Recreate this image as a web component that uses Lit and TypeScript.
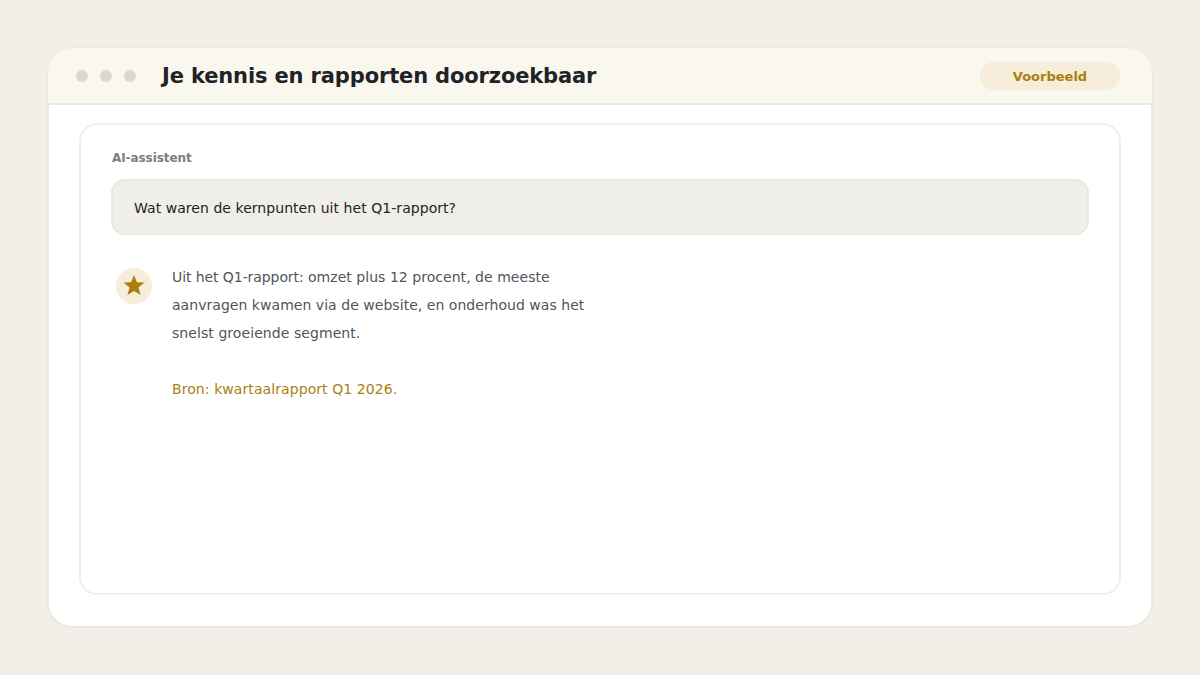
import { LitElement, html, css } from "lit";
import { customElement } from "lit/decorators.js";

@customElement("app-root")
export class AppRoot extends LitElement {
  static styles = css`
    :host {
      display: block;
      box-sizing: border-box;
      height: 675px;
      padding: 47px;
      background: #f3eee7;
      font-family: "DejaVu Sans", sans-serif;
      color: #1d2327;
    }
    * { box-sizing: border-box; }
    .window {
      height: 581px;
      border: 2px solid #ece9e2;
      border-radius: 25px;
      background: #fff;
      display: flex;
      flex-direction: column;
    }
    .header {
      height: 57px;
      flex: none;
      margin: -1px -1px 0;
      padding: 0 32px 0 28px;
      border-bottom: 2px solid #ebe8e2;
      border-radius: 24px 24px 0 0;
      background: #faf7ef;
      display: flex;
      align-items: center;
    }
    .dots { display: flex; gap: 12px; margin-right: 26px; }
    .dot { width: 12px; height: 12px; border-radius: 50%; background: #dad8cf; }
    .title { margin: 0; font-size: 21px; font-weight: 700; line-height: 28px; letter-spacing: -0.14px; white-space: nowrap; }
    .badge {
      margin-left: auto;
      width: 140px;
      height: 28px;
      border-radius: 14px;
      background: #f6edda;
      color: #a97f10;
      font-size: 13px;
      font-weight: 700;
      line-height: 30px;
      text-align: center;
    }
    .panel {
      margin: 18px 30px 0;
      height: 472px;
      border: 2px solid #f0efeb;
      border-radius: 18px;
      padding: 25px 30px;
    }
    .label { font-size: 12px; font-weight: 700; line-height: 16px; letter-spacing: -0.07px; color: #7c7e80; margin-left: 1px; }
    .question {
      margin-top: 13px;
      height: 56px;
      border: 2px solid #ebe9e2;
      border-radius: 14px;
      background: #f0eee9;
      padding: 0 21px;
      font-size: 14px;
      line-height: 54px;
      letter-spacing: 0.05px;
    }
    .answer { display: flex; gap: 20px; margin: 28px 0 0 5px; }
    .avatar { width: 36px; height: 36px; margin-top: 5px; flex: none; display: block; }
    .copy { font-size: 14px; line-height: 28px; color: #50555a; white-space: nowrap; }
    .copy p { margin: 0; }
    .tight { letter-spacing: -0.08px; }
    .wide { letter-spacing: 0.04px; }
    .loose { letter-spacing: 0.04px; }
    .looser { letter-spacing: 0.07px; }
    .copy .source { margin-top: 28px; color: #a97f10; letter-spacing: 0.08px; }
  `;

  render() {
    return html`
      <main class="window">
        <header class="header">
          <div class="dots"><span class="dot"></span><span class="dot"></span><span class="dot"></span></div>
          <h1 class="title">Je kennis en rapporten doorzoekbaar</h1>
          <span class="badge">Voorbeeld</span>
        </header>
        <section class="panel">
          <div class="label">AI-assistent</div>
          <div class="question">Wat waren de kernpunten uit het Q1-rapport?</div>
          <div class="answer">
            <svg class="avatar" viewBox="0 0 36 36">
              <circle cx="18" cy="18" r="18" fill="#f6edda" />
              <path fill="#a97f10" d="M18 7l2.9 7.3 7.6.2-6.1 4.9 2.2 7.6L18 22.9 11.4 27l2.2-7.6-6.1-4.9 7.6-.2z" />
            </svg>
            <div class="copy">
              <p><span class="tight">Uit het Q1-rapport: </span><span class="wide">omzet plus 12 procent, de meeste</span></p>
              <p class="loose">aanvragen kwamen via de website, en onderhoud was het</p>
              <p class="looser">snelst groeiende segment.</p>
              <p class="source">Bron: kwartaalrapport Q1 2026.</p>
            </div>
          </div>
        </section>
      </main>
    `;
  }
}
